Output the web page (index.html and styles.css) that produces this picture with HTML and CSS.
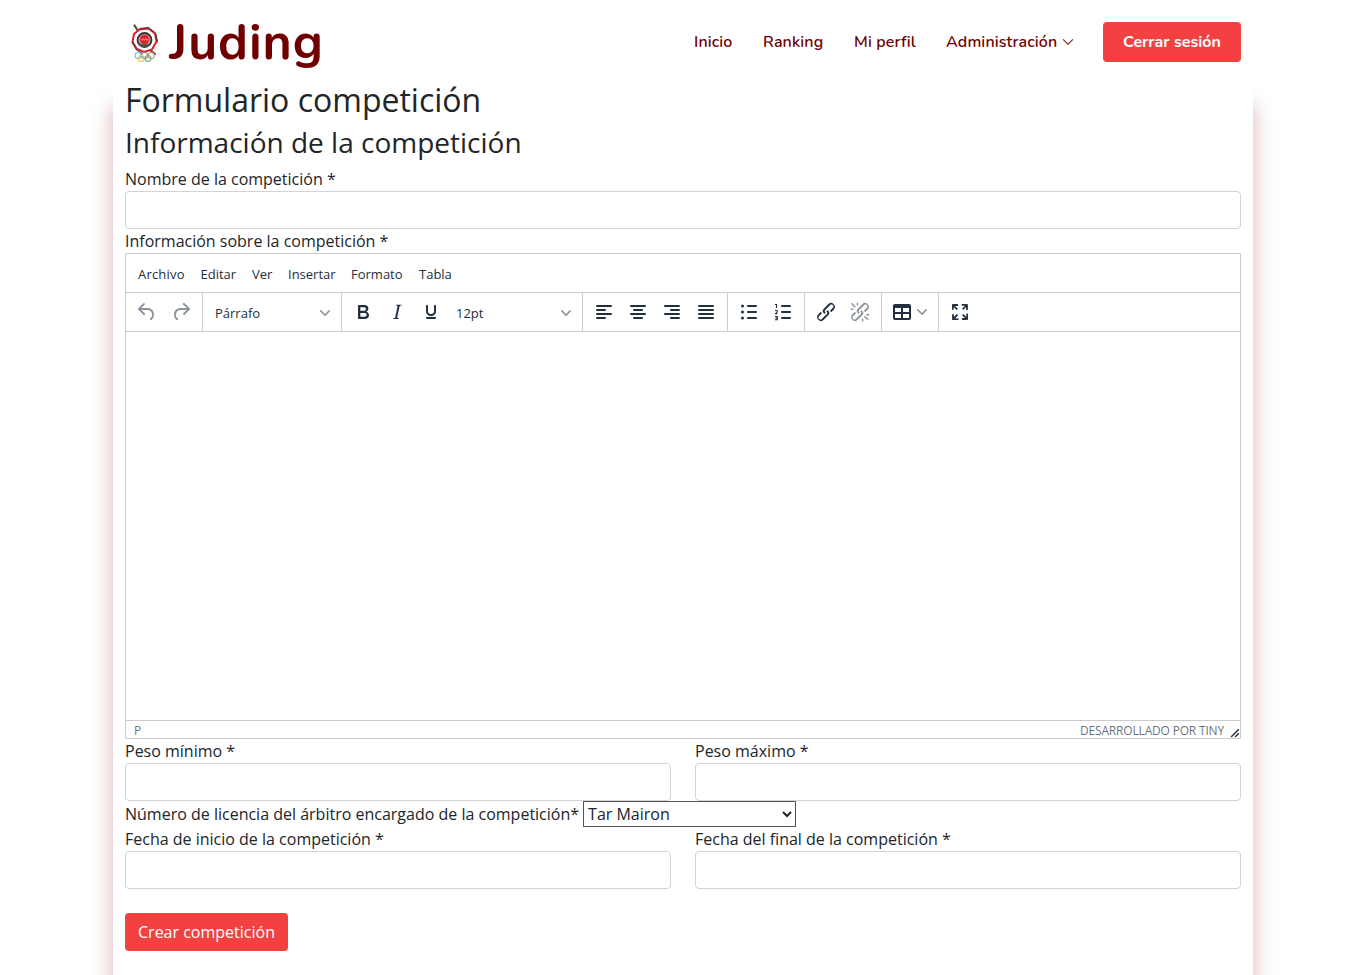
FILE: index.html
```html
<!DOCTYPE html>
<html lang="es">
<head>
<meta charset="utf-8">
<title>Juding</title>
<link rel="stylesheet" href="styles.css">
</head>
<body>
<header class="header">
  <a class="logo">
    <svg class="crest" width="30" height="40" viewBox="0 0 30 40">
      <path d="M4.500 1.500 8 7M20 26l5 4" stroke="#4c5138" stroke-width="2.200" stroke-linecap="round"/>
      <path d="m9.500 5.500 9-1 6.500 5 1.500 8-4.500 8-8 2.500-7-3L2.500 18 4 10z" fill="#fff" stroke="#d9202b" stroke-width="2"/>
      <path d="m9.500 4.500 9-1 7 5.500M2 18l4.500 8 6 3.500M26 10l1.500 8" fill="none" stroke="#35302f" stroke-width="1"/>
      <circle cx="14.500" cy="16" r="7" fill="#aaa" stroke="#333" stroke-width="1.800"/>
      <circle cx="14.500" cy="15.500" r="4.800" fill="#e3222a"/>
      <path d="m10.500 14.500 1.500 2 1.300-2 1.200 2 1.300-2 1.200 2 1.500-2" fill="none" stroke="#ff9a92" stroke-width=".8"/>
      <path d="M9 20h11l-2 2.500h-7z" fill="#555"/>
      <g fill="none" stroke-width="1.100"><circle cx="8" cy="31.500" r="3" stroke="#78bfe2"/><circle cx="14.700" cy="31.500" r="3" stroke="#888"/><circle cx="21.300" cy="31.500" r="3" stroke="#ee8b89"/><circle cx="11.300" cy="34.500" r="3" stroke="#e8c653"/><circle cx="18" cy="34.500" r="3" stroke="#5eb58a"/></g>
    </svg>
    <svg class="wordmark" width="160" height="60"><text x="2.500" y="47" textLength="153.500" lengthAdjust="spacing">Juding</text></svg>
  </a>
  <nav class="nav">
    <a class="w-inicio">Inicio</a>
    <a class="w-ranking">Ranking</a>
    <a class="w-perfil">Mi perfil</a>
    <a class="w-admin"><span>Administración</span><svg width="12" height="12" viewBox="0 0 16 16"><path d="M1.600 4.600a.5.500 0 0 1 .8 0L8 10.300l5.600-5.700a.5.500 0 0 1 .8.800l-6 6a.5.500 0 0 1-.8 0l-6-6a.5.500 0 0 1 0-.8z" fill="#700000" stroke="#700000" stroke-width=".4"/></svg></a>
    <a class="logout">Cerrar sesión</a>
  </nav>
</header>
<main class="panel">
  <h2>Formulario competición</h2>
  <h3>Información de la competición</h3>
  <label for="nombre">Nombre de la competición *</label>
  <input class="control" id="nombre">
  <label>Información sobre la competición *</label>
  <section class="editor">
    <div class="menubar"><span class="wide">Archivo</span><span>Editar</span><span>Ver</span><span>Insertar</span><span>Formato</span><span>Tabla</span></div>
    <div class="toolbar">
      <div class="group">
        <span class="tool off"><svg width="24" height="24"><path d="M6.400 8H12c3.700 0 6.200 2 6.800 5.100.6 2.700-.4 5.600-2.300 6.800a1 1 0 0 1-1-1.800c1.100-.6 1.800-2.700 1.400-4.600-.5-2.100-2.100-3.500-4.900-3.500H6.400l3.300 3.300a1 1 0 1 1-1.400 1.400l-5-5a1 1 0 0 1 0-1.400l5-5a1 1 0 0 1 1.400 1.400L6.400 8Z"/></svg></span>
        <span class="tool off"><svg width="24" height="24"><path d="M17.600 10H12c-2.800 0-4.400 1.400-4.900 3.500-.4 2 .3 4 1.400 4.600a1 1 0 1 1-1 1.800c-2-1.200-2.900-4.100-2.300-6.800.6-3 3-5.100 6.800-5.100h5.600l-3.300-3.300a1 1 0 1 1 1.400-1.400l5 5a1 1 0 0 1 0 1.400l-5 5a1 1 0 0 1-1.400-1.400l3.300-3.300Z"/></svg></span>
      </div>
      <div class="group">
        <span class="pick">Párrafo<svg class="chev" width="10" height="10"><path d="M8.700 2.200c.3-.3.8-.3 1 0 .4.4.4.9 0 1.200L5.700 7.800c-.3.3-.9.3-1.200 0L.2 3.400a.8.8 0 0 1 0-1.200c.3-.3.8-.3 1.100 0L5 6l3.700-3.800Z"/></svg></span>
      </div>
      <div class="group">
        <span class="tool"><svg width="24" height="24"><path fill-rule="evenodd" d="M7.800 19c-.3 0-.5 0-.6-.2l-.2-.5V5.700c0-.2 0-.4.2-.5l.6-.2h5c1.500 0 2.700.3 3.500 1 .7.6 1.100 1.400 1.100 2.500a3 3 0 0 1-.6 1.900c-.4.6-1 1-1.600 1.200.4.1.9.3 1.300.6s.8.7 1 1.200c.4.4.5 1 .5 1.600 0 1.300-.4 2.300-1.300 3-.8.7-2.100 1-3.800 1H7.800Zm5-8.300c.6 0 1.200-.1 1.600-.5.4-.3.6-.7.6-1.300 0-1.100-.8-1.700-2.300-1.700H9.300v3.500h3.400Zm.5 6c.7 0 1.300-.1 1.700-.4.4-.4.6-.9.6-1.500s-.2-1-.7-1.400c-.4-.3-1-.4-2-.4H9.400v3.800h4Z"/></svg></span>
        <span class="tool"><svg width="24" height="24"><path d="m16.700 4.700-.1.900h-.3c-.6 0-1 0-1.400.3-.3.3-.4.6-.5 1.100l-2.100 9.800v.6c0 .5.4.8 1.400.8h.2l-.2.800H8l.2-.8h.2c1.100 0 1.800-.5 2-1.500l2-9.800.1-.5c0-.6-.4-.8-1.400-.8h-.3l.2-.9h5.800Z"/></svg></span>
        <span class="tool"><svg width="24" height="24"><path d="M16 5c.6 0 1 .4 1 1v5.500a4 4 0 0 1-.4 1.800l-1 1.400a5.300 5.300 0 0 1-5.500 1 5 5 0 0 1-1.600-1c-.5-.4-.8-.9-1.100-1.400a4 4 0 0 1-.4-1.800V6c0-.6.4-1 1-1s1 .4 1 1v5.500c0 .3 0 .6.2 1l.6.7a3.300 3.300 0 0 0 2.200.8 3.400 3.400 0 0 0 2.200-.8c.3-.2.4-.5.6-.8l.2-.9V6c0-.6.4-1 1-1ZM8 17h8c.6 0 1 .4 1 1s-.4 1-1 1H8a1 1 0 0 1 0-2Z"/></svg></span>
        <span class="pick">12pt<svg class="chev" width="10" height="10"><path d="M8.700 2.200c.3-.3.8-.3 1 0 .4.4.4.9 0 1.200L5.700 7.800c-.3.3-.9.3-1.200 0L.2 3.400a.8.8 0 0 1 0-1.200c.3-.3.8-.3 1.100 0L5 6l3.700-3.800Z"/></svg></span>
      </div>
      <div class="group">
        <span class="tool"><svg width="24" height="24"><path class="ln" d="M5 6h14M5 10h8M5 14h14M5 18h8"/></svg></span>
        <span class="tool"><svg width="24" height="24"><path class="ln" d="M5 6h14M8 10h8M5 14h14M8 18h8"/></svg></span>
        <span class="tool"><svg width="24" height="24"><path class="ln" d="M5 6h14M11 10h8M5 14h14M11 18h8"/></svg></span>
        <span class="tool"><svg width="24" height="24"><path class="ln" d="M5 6h14M5 10h14M5 14h14M5 18h14"/></svg></span>
      </div>
      <div class="group">
        <span class="tool"><svg width="24" height="24"><path class="ln" d="M11 6h8M11 12h8M11 18h8"/><circle cx="5.500" cy="6" r="1.500"/><circle cx="5.500" cy="12" r="1.500"/><circle cx="5.500" cy="18" r="1.500"/></svg></span>
        <span class="tool"><svg width="24" height="24"><path class="ln" d="M11 6h8M11 12h8M11 18h8"/><path class="num" d="M4 4.500h1.500V8M4 10.500h2.200v1.600L4.500 13.700h2M4 16.500h2.300v3.200H4M4.500 18.100h1.800"/></svg></span>
      </div>
      <div class="group">
        <span class="tool"><svg width="24" height="24"><path d="M6.200 12.300a1 1 0 0 1 1.400 1.400l-2 2a2 2 0 1 0 2.600 2.800l4.800-4.800a1 1 0 0 0 0-1.400 1 1 0 1 1 1.400-1.300 2.900 2.900 0 0 1 0 4L9.600 20a3.900 3.900 0 0 1-5.500-5.500l2-2Zm11.600-.6a1 1 0 0 1-1.400-1.400l2-2a2 2 0 1 0-2.600-2.800L11 10.300a1 1 0 0 0 0 1.400A1 1 0 1 1 9.600 13a2.900 2.900 0 0 1 0-4L14.400 4a3.900 3.900 0 0 1 5.500 5.500l-2 2Z"/></svg></span>
        <span class="tool off"><svg width="24" height="24"><path d="M6.200 12.300a1 1 0 0 1 1.400 1.400l-2 2a2 2 0 1 0 2.600 2.800l4.800-4.800a1 1 0 0 0 0-1.400 1 1 0 1 1 1.400-1.300 2.900 2.900 0 0 1 0 4L9.600 20a3.900 3.900 0 0 1-5.500-5.500l2-2Zm11.600-.6a1 1 0 0 1-1.400-1.400l2-2a2 2 0 1 0-2.600-2.800L11 10.300a1 1 0 0 0 0 1.400A1 1 0 1 1 9.600 13a2.900 2.900 0 0 1 0-4L14.400 4a3.900 3.900 0 0 1 5.500 5.500l-2 2ZM7.600 6.300a.8.8 0 0 1-1 1.100L3.300 4.200a.7.7 0 1 1 1-1l3.200 3.100ZM5.100 8.600a.8.8 0 0 1 0 1.500H3a.8.8 0 0 1 0-1.500H5Zm5-3.500a.8.8 0 0 1-1.500 0V3a.8.8 0 0 1 1.500 0V5Zm6 11.800a.8.8 0 0 1 1-1l3.200 3.200a.8.8 0 0 1-1 1L16 17Zm-2.200 2a.8.8 0 0 1 1.500 0V21a.8.8 0 0 1-1.500 0V19Zm5-3.500a.7.7 0 1 1 0-1.500H21a.8.8 0 0 1 0 1.500H19Z"/></svg></span>
      </div>
      <div class="group">
        <span class="tool split"><svg width="24" height="24"><path fill-rule="evenodd" d="M19 4a2 2 0 0 1 2 2v12a2 2 0 0 1-2 2H5a2 2 0 0 1-2-2V6c0-1.100.9-2 2-2h14ZM5 14v4h6v-4H5Zm14 0h-6v4h6v-4Zm0-6h-6v4h6V8ZM5 12h6V8H5v4Z"/></svg><svg class="chev" width="10" height="10"><path d="M8.700 2.200c.3-.3.8-.3 1 0 .4.4.4.9 0 1.200L5.700 7.800c-.3.3-.9.3-1.200 0L.2 3.400a.8.8 0 0 1 0-1.200c.3-.3.8-.3 1.100 0L5 6l3.700-3.800Z"/></svg></span>
      </div>
      <div class="group last">
        <span class="tool"><svg width="24" height="24"><path d="m15.300 10-1.200-1.300 2.900-3h-2.300a.9.900 0 1 1 0-1.700H19c.5 0 .9.400.9.900v4.400a.9.900 0 1 1-1.800 0V7l-2.900 3Zm0 4 3 3v-2.300a.9.900 0 1 1 1.700 0V19c0 .5-.4.900-.9.900h-4.400a.9.900 0 1 1 0-1.800H17l-3-2.900 1.300-1.200ZM10 15.400l-2.900 3h2.300a.9.900 0 1 1 0 1.700H5a.9.900 0 0 1-.9-.9v-4.400a.9.900 0 1 1 1.800 0V17l2.900-3 1.200 1.300ZM8.700 10 5.700 7v2.300a.9.900 0 0 1-1.700 0V5c0-.5.400-.9.900-.9h4.400a.9.900 0 0 1 0 1.800H7l3 2.900-1.300 1.200Z"/></svg></span>
      </div>
    </div>
    <div class="canvas"></div>
    <div class="status"><span>P</span><span class="brand">DESARROLLADO POR TINY</span><svg width="10" height="10"><path d="M8.100 1.100A.5.500 0 1 1 9 2l-7 7A.5.500 0 1 1 1 8l7-7ZM8.100 5.100A.5.500 0 1 1 9 6l-3 3A.5.500 0 1 1 5 8l3-3Z"/></svg></div>
  </section>
  <div class="pair">
    <div><label for="min">Peso mínimo *</label><input class="control" id="min"></div>
    <div><label for="max">Peso máximo *</label><input class="control" id="max"></div>
  </div>
  <div class="referee">
    <span>Número de licencia del árbitro encargado de la competición*</span>
    <select><option>Tar Mairon</option></select>
  </div>
  <div class="pair">
    <div><label for="ini">Fecha de inicio de la competición *</label><input class="control" id="ini"></div>
    <div><label for="fin">Fecha del final de la competición *</label><input class="control" id="fin"></div>
  </div>
  <button class="submit">Crear competición</button>
</main>
</body>
</html>
```
FILE: styles.css
```css
* { box-sizing: border-box; }
html, body { height: 100%; overflow: hidden; }
body {
  margin: 0;
  display: flex;
  flex-direction: column;
  background: #fff;
  color: #212529;
  font: 16px/24px "Open Sans", sans-serif;
}
.header {
  flex: none;
  height: 84px;
  padding: 0 125px;
  display: flex;
  justify-content: space-between;
  align-items: center;
  background: #fff;
  z-index: 2;
}
.logo { display: flex; align-items: center; padding-left: 5px; }
.crest { margin-top: 3px; }
.wordmark { margin-left: 7px; overflow: visible; }
.wordmark text {
  font: 700 50px Nunito, Lato, sans-serif;
  fill: #700000;
}
.nav {
  display: flex;
  align-items: center;
  font: 600 16px/24px Nunito, "Open Sans", sans-serif;
  color: #700000;
}
.nav a { white-space: nowrap; letter-spacing: .12px; }
.w-inicio { width: 69px; }
.w-ranking { width: 91px; }
.w-perfil { width: 92px; }
.w-admin { width: 157px; display: flex; align-items: center; }
.w-admin span { width: 116px; }
.nav .logout {
  width: 138px;
  height: 40px;
  line-height: 40px;
  border-radius: 4px;
  background: #f34141;
  color: #fff;
  text-align: center;
  font-weight: 700;
  letter-spacing: 0;
}
.panel {
  flex: 1;
  width: 1140px;
  margin: -4px auto 0;
  padding: 1px 12px 0;
  background: #fff;
  box-shadow: 0 25px 20px rgba(125, 0, 0, .3);
}
h2, h3 { margin: 0 0 7px; font-weight: 400; line-height: 1.2; }
h2 { font-size: 32px; }
h3 { font-size: 28px; }
label { display: block; height: 24px; }
.control {
  display: block;
  width: 100%;
  height: 38px;
  border: 1px solid #ced4da;
  border-radius: 4px;
  background: #fff;
}
.editor {
  height: 486px;
  display: flex;
  flex-direction: column;
  border: 1px solid #ccc;
  color: #222f3e;
  font-size: 13px;
}
.menubar {
  height: 39px;
  display: grid;
  grid-template-columns: 62.5px 51.5px 36px 63px 68px auto;
  align-items: center;
  padding: 2px 12px 0;
  border-bottom: 1px solid #ccc;
}
.wide { letter-spacing: .2px; }
.toolbar { height: 39px; display: flex; border-bottom: 1px solid #ccc; }
.group { display: flex; align-items: center; padding: 0 4px; border-right: 1px solid #ccc; }
.group.last { border: 0; }
.tool { width: 34px; height: 34px; display: flex; align-items: center; justify-content: center; }
.tool svg, .chev, .status svg { fill: #222f3e; }
.off svg { opacity: .5; }
.ln { stroke: #222f3e; stroke-width: 2; stroke-linecap: round; }
.num { fill: none; stroke: #222f3e; stroke-width: 1.1; }
.tool.split { width: 48px; justify-content: space-between; padding: 0 7px 0 4px; }
.pick { width: 130px; padding: 2px 7px 0 8px; display: flex; align-items: center; justify-content: space-between; }
.chev, .split .chev { opacity: .5; }
.canvas { flex: 1; }
.status {
  height: 18px;
  display: flex;
  align-items: center;
  padding: 0 0 0 8px;
  border-top: 1px solid #ccc;
  font-size: 12px;
  line-height: 14px;
  color: rgba(34, 47, 62, .7);
}
.status span { padding-top: 3px; }
.brand { margin-left: auto; margin-right: 6px; letter-spacing: -.18px; }
.status svg { align-self: flex-end; }
.pair { display: grid; grid-template-columns: 1fr 1fr; gap: 24px; }
.referee { height: 26px; display: flex; gap: 4px; }
.referee span { padding-top: 1px; }
.referee select {
  width: 213px;
  height: 26px;
  border: 1px solid #555;
  background: #fff;
  color: #212529;
  font: 16px "Open Sans", sans-serif;
}
.submit {
  display: block;
  margin-top: 24px;
  width: 163px;
  height: 38px;
  padding: 0;
  border: 0;
  border-radius: 4px;
  background: #f34141;
  color: #fff;
  font: 16px "Open Sans", sans-serif;
}
```
